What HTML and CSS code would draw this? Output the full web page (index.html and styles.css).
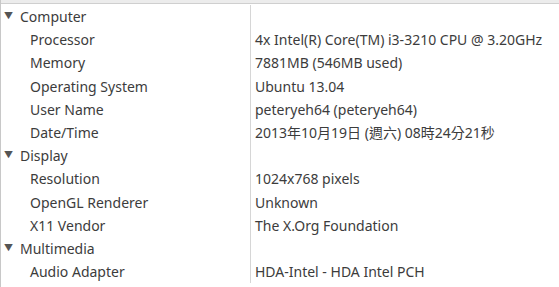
FILE: index.html
```html
<!DOCTYPE html>
<html lang="en">
<head>
	<meta charset="utf-8">
	<title>System Information</title>
	<link rel="stylesheet" href="styles.css">
</head>
<body>
	<div class="tree-view">
		<div class="tree-header"></div>
		<div class="tree-body">
			<div class="row group"><span class="label"><span class="expander">&#9660;</span>Computer</span><span class="value"></span></div>
			<div class="row"><span class="label">Processor</span><span class="value">4x Intel(R) Core(TM) i3-3210 CPU @ 3.20GHz</span></div>
			<div class="row"><span class="label">Memory</span><span class="value">7881MB (546MB used)</span></div>
			<div class="row"><span class="label">Operating System</span><span class="value">Ubuntu 13.04</span></div>
			<div class="row"><span class="label">User Name</span><span class="value">peteryeh64 (peteryeh64)</span></div>
			<div class="row"><span class="label">Date/Time</span><span class="value">2013年10月19日 (週六) 08時24分21秒</span></div>
			<div class="row group"><span class="label"><span class="expander">&#9660;</span>Display</span><span class="value"></span></div>
			<div class="row"><span class="label">Resolution</span><span class="value">1024x768 pixels</span></div>
			<div class="row"><span class="label">OpenGL Renderer</span><span class="value">Unknown</span></div>
			<div class="row"><span class="label">X11 Vendor</span><span class="value">The X.Org Foundation</span></div>
			<div class="row group"><span class="label"><span class="expander">&#9660;</span>Multimedia</span><span class="value"></span></div>
			<div class="row"><span class="label">Audio Adapter</span><span class="value">HDA-Intel - HDA Intel PCH</span></div>
		</div>
	</div>
</body>
</html>
```

FILE: styles.css
```css
html, body {
	margin: 0;
	padding: 0;
	background: #ffffff;
}

.tree-view {
	width: 559px;
	height: 287px;
	overflow: hidden;
	font-family: "Noto Sans", "Noto Sans CJK TC", sans-serif;
	font-size: 14px;
	color: #3c3c3c;
	border-left: 1px solid #c8c8c8;
	box-sizing: border-box;
}

.tree-header {
	height: 3px;
	background: #ececec;
	border-bottom: 1px solid #cfcfcf;
}

.tree-body {
	display: grid;
	grid-template-columns: 250px 1fr;
	grid-auto-rows: 23.2px;
	padding-top: 1px;
}

.row {
	display: contents;
}

.label, .value {
	line-height: 23px;
	white-space: nowrap;
}

.label {
	padding-left: 29px;
	border-right: 1px solid #d6d6d6;
}

.value {
	padding-left: 4px;
}

.group .label {
	padding-left: 2px;
}

.expander {
	display: inline-block;
	width: 16px;
	font-size: 9px;
	color: #555555;
	vertical-align: top;
	line-height: 21px;
	padding-left: 1px;
}
```
